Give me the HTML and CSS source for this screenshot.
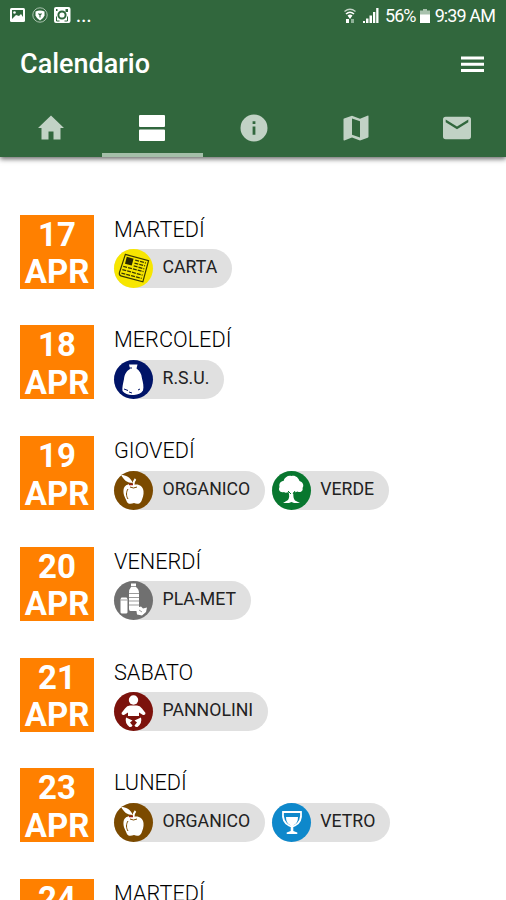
FILE: index.html
```html
<!DOCTYPE html>
<html lang="it">
<head>
    <meta charset="UTF-8">
    <meta name="viewport" content="width=device-width, initial-scale=1.0">
    <title>Calendario</title>

    <link rel="stylesheet" href="styles.css">
</head>
<body>
    <!-- Shared icon, used by two rows -->
    <svg class="defs" width="0" height="0">
        <symbol id="apple" viewBox="0 0 39 39">
            <path fill="#fff" d="M7 4c5 0 9 2 12 8-6 0-9-3-12-8zM19 14c-4-2-9 0-9.500 5-.5 5 2 8 3 11 1 3 4 3.500 7.500 2 3 1.500 6 1 7.500-2 1-3 2.500-6 2-10-.5-5-5-7.500-10.500-6z"/>
            <path fill="none" stroke="#fff" stroke-width="2" d="M19.500 14c0-3 0-4 2-6"/>
            <path fill="none" stroke="#7b4a00" stroke-width="1" d="M14 18c-2 3-2 7 0 10M16 16q3.500 2 7 0"/>
            <path fill="none" stroke="#9a1c16" stroke-width="1.500" d="M15 13.500h4"/>
        </symbol>
    </svg>

    <header>
        <div class="status">
            <svg class="notif" width="64" height="20" viewBox="0 0 64 20">
                <rect x="0" y="1" width="15" height="14" rx="1.500" fill="#fff"/>
                <path fill="#2f673c" d="M2 3h11v7l-2-3-2 2-3-1-4 4z"/>
                <circle cx="4.500" cy="5.500" r="1.300" fill="#fff"/>
                <circle cx="30" cy="8" r="7.200" fill="none" stroke="#a9c2ae" stroke-width="1"/>
                <path fill="#fff" d="M25.500 4.500q4.500-2 9 0v4q-1 3-4.500 5-3.500-2-4.500-5z"/>
                <path fill="none" stroke="#2f673c" stroke-width="1.100" d="M28.500 6.500l1.500 1.500 1.500-1.500M30 8v2.500"/>
                <rect x="44" y="0" width="16.500" height="16" rx="2" fill="#fff"/>
                <path fill="#2f673c" d="M46 2h1.500v2H46zM55.500 2H58v3h-2.500z"/>
                <circle cx="52" cy="8" r="3.600" fill="none" stroke="#2f673c" stroke-width="2"/>
                <path fill="none" stroke="#2f673c" d="M46.500 9.500v4.500h3M57.500 9.500v4.500h-3"/>
            </svg>
            <span class="dots">...</span>
            <span class="push"></span>
            <svg class="wifi" width="12" height="16" viewBox="0 0 12 16">
                <path fill="none" stroke="#c1d2c5" stroke-width="1.300" d="M.5 3.500q5.500-4.500 11 0"/>
                <path fill="none" stroke="#fff" stroke-width="1.600" d="M2 6q4-3.500 8 0"/>
                <path fill="#fff" d="M3.500 7.500q2.500-2 5 0L6 11zM2 11h3v4H2z"/>
                <path fill="#8fb198" d="M7 11h3v4H7z"/>
            </svg>
            <svg class="signal" width="16" height="16" viewBox="0 0 16 16">
                <path fill="#fff" d="M0 13h2v2H0zM3 10.500h2.500V15H3zM6.500 7.500H9V15H6.500zM10 4h2.300v11H10zM13.200 0h2.300v15h-2.300z"/>
            </svg>
            <span class="percent">56%</span>
            <svg class="battery" width="10" height="16" viewBox="0 0 10 16">
                <path fill="#a9c2ae" d="M3 1h4v1.500h3V7H0V2.500h3z"/>
                <path fill="#fff" d="M0 6.500h10V15H0z"/>
            </svg>
            <span class="time">9:39 AM</span>
        </div>

        <div class="title-bar">
            <h1>Calendario</h1>
            <svg width="23" height="17" viewBox="0 0 23 17">
                <path fill="#fff" d="M0 .5h23v3H0zM0 6.800h23v3H0zM0 13h23v3H0z"/>
            </svg>
        </div>

        <nav>
            <a class="tab">
                <svg viewBox="0 0 28 28"><path d="M11.500 25.500H4.500V14H1L14 1.500 27 14h-3.500v11.500h-7v-8h-5z"/></svg>
            </a>
            <a class="tab active">
                <svg viewBox="0 0 28 28"><path d="M2 1h24q1 0 1 1v10q0 1-1 1H2q-1 0-1-1V2q0-1 1-1zM2 15.500h24q1 0 1 1V26q0 1-1 1H2q-1 0-1-1v-9.500q0-1 1-1z"/></svg>
            </a>
            <a class="tab">
                <svg viewBox="0 0 28 28"><path fill-rule="evenodd" d="M14 .5a13.500 13.500 0 1 0 0 27 13.500 13.500 0 0 0 0-27zM12.600 7.200h2.800V10h-2.800zM12.600 12.600h2.800v8.200h-2.800z"/></svg>
            </a>
            <a class="tab">
                <svg viewBox="0 0 28 28"><path fill-rule="evenodd" d="M26 1.500l-8 3.200-8-3L2 4.400q-.5.200-.5.800v20.600q0 .9.800.7l7.700-3.100 8 3 7.700-2.700q.8-.2.800-.9V2.200q0-.8-.5-.7zM18 23.500l-8-2.800V4.500l8 2.800z"/></svg>
            </a>
            <a class="tab">
                <svg viewBox="0 0 28 28"><path fill-rule="evenodd" d="M2.700 2.700h22.600Q28 2.700 28 5.400v17.200q0 2.700-2.700 2.700H2.700Q0 25.300 0 22.600V5.400q0-2.700 2.700-2.700zM25.300 8.200V5.500L14 12.500 2.700 5.500v2.700l11.300 7z"/></svg>
            </a>
        </nav>
    </header>

    <main>
        <section class="day">
            <div class="date">17<br>APR</div>
            <div class="info">
                <h2>MARTEDÍ</h2>
                <div class="chips">
                    <div class="chip">
                        <svg class="icon yellow" viewBox="0 0 39 39">
                            <g transform="rotate(15 19.500 19.500)" fill="none" stroke="#3a3900">
                                <path d="M8 8h24v22H10q-3 0-3-3z" stroke-width="1.200"/>
                                <path fill="#282800" stroke="none" d="M10 10h7v7h-7z"/>
                                <path stroke-width="1.300" stroke-dasharray="4 1" d="M19 11h11M19 14h11M19 17h11M9 20h21M9 23.500h21M9 27h21"/>
                            </g>
                        </svg>
                        <span>CARTA</span>
                    </div>
                </div>
            </div>
        </section>

        <section class="day">
            <div class="date">18<br>APR</div>
            <div class="info">
                <h2>MERCOLEDÍ</h2>
                <div class="chips">
                    <div class="chip">
                        <svg class="icon navy" viewBox="0 0 39 39">
                            <path fill="#fff" d="M15 4.500h8.500l-1 4c3 2 5 5 5.500 10 1 4 2 8 1 12-2 3-5 4-9 4.500-5 .5-9-1-11.500-4-.5-4 .5-7 1.500-12 .5-5 3-8.500 6-10z"/>
                            <path fill="none" stroke="#001468" d="M15 8h3M10 29l4 1.500M15 32l3 1M24 30l2-1"/>
                        </svg>
                        <span>R.S.U.</span>
                    </div>
                </div>
            </div>
        </section>

        <section class="day">
            <div class="date">19<br>APR</div>
            <div class="info">
                <h2>GIOVEDÍ</h2>
                <div class="chips">
                    <div class="chip">
                        <svg class="icon brown"><use href="#apple"/></svg>
                        <span>ORGANICO</span>
                    </div>
                    <div class="chip">
                        <svg class="icon green" viewBox="0 0 39 39">
                            <path fill="#fff" d="M12 21c-4 1-6-2-4.500-5-1-4 2-6 4-6 1-4 5-6 8-5 4-1 7 2 8 5 3 1 5 4 3 7 1 3-2 5-5 3.500-2 1-3 .5-4 .5-.5 4 0 7 1.500 8.500l5 2.500h-6l-2.500-1-2.500 1h-6l5-3c1.500-2 1.500-5 .5-8-2 1-3.500 1-4.500 0z"/>
                            <path fill="none" stroke="#08772f" d="M16 20l3 3M23 20l-2 3"/>
                        </svg>
                        <span>VERDE</span>
                    </div>
                </div>
            </div>
        </section>

        <section class="day">
            <div class="date">20<br>APR</div>
            <div class="info">
                <h2>VENERDÍ</h2>
                <div class="chips">
                    <div class="chip">
                        <svg class="icon grey" viewBox="0 0 39 39">
                            <path fill="#fff" d="M17 2.500h5V6q3 2 3 6v16q0 2-1.500 2h-7q-1.500 0-1.500-2V12q0-4 2-6zM7.500 16.500h5l1 1.500v13.500l-1 1h-5l-1-1V18zM22 27l5-1.500 2 2 4-1-1 4.500-4 3.500-5-1z"/>
                            <path fill="none" stroke="#707070" stroke-width=".7" d="M16 5.500h6M15 12.500h10M15 16.500h10M15 20h10M15 24h10M6.500 19h7M25 29l3 2"/>
                        </svg>
                        <span>PLA-MET</span>
                    </div>
                </div>
            </div>
        </section>

        <section class="day">
            <div class="date">21<br>APR</div>
            <div class="info">
                <h2>SABATO</h2>
                <div class="chips">
                    <div class="chip">
                        <svg class="icon red" viewBox="0 0 39 39">
                            <circle cx="19.500" cy="8" r="4.700" fill="#fff"/>
                            <path fill="#fff" d="M16 13.500h7q3 0 5 3l3.500 4.500q0 2.500-2.500 2L25 20.500V24H14v-3.500L10 23q-2.500.5-2.500-2l3.500-4.500q2-3 5-3z"/>
                            <path fill="#fff" d="M12 25.500l6.500 3-2.500 2 2.500 3q-1 2-3 1.500-5-4-3.500-9.500zM27 25.500l-6.500 3 2.500 2-2.500 3q1 2 3 1.500 5-4 3.500-9.500z"/>
                        </svg>
                        <span>PANNOLINI</span>
                    </div>
                </div>
            </div>
        </section>

        <section class="day">
            <div class="date">23<br>APR</div>
            <div class="info">
                <h2>LUNEDÍ</h2>
                <div class="chips">
                    <div class="chip">
                        <svg class="icon brown"><use href="#apple"/></svg>
                        <span>ORGANICO</span>
                    </div>
                    <div class="chip">
                        <svg class="icon blue" viewBox="0 0 39 39">
                            <path fill="none" stroke="#fff" stroke-width="1.800" d="M11 9h18q1 10-6 13.500-3 1.500-6 0Q10 19 11 9z"/>
                            <path fill="#fff" d="M14 14h12q0 6-4 8h-4q-4-2-4-8zM18.700 22h2.600v6l4 1.500V31H14.700v-1.500l4-1.500z"/>
                        </svg>
                        <span>VETRO</span>
                    </div>
                </div>
            </div>
        </section>

        <section class="day">
            <div class="date">24<br>APR</div>
            <div class="info">
                <h2>MARTEDÍ</h2>
            </div>
        </section>
    </main>
</body>
</html>
```
FILE: styles.css
```css
body {
    font-family: Roboto, sans-serif;
    background: #ffffff;
    color: #000000;
    margin: 0;
    height: 900px;
    overflow: hidden;
}

.defs {
    position: absolute;
}

header {
    background: #31673d;
    color: #ffffff;
    height: 157px;
    box-shadow: 0 2px 5px rgba(0, 0, 0, 0.6);
}

.status {
    display: flex;
    align-items: center;
    height: 31px;
    padding: 0 11px 0 10px;
    font-size: 18px;
    line-height: 31px;
}

.notif {
    margin-top: 3px;
}

.dots {
    margin-left: 2px;
    font-weight: 500;
    letter-spacing: 0.2px;
}

.push {
    flex: 1;
}

.signal {
    margin: 0 6px 0 7px;
}

.battery {
    margin: 0 5px 0 4px;
}

.percent,
.time {
    white-space: nowrap;
    letter-spacing: -0.9px;
}

.title-bar {
    display: flex;
    justify-content: space-between;
    align-items: center;
    height: 66px;
    padding: 0 22px 0 20px;
}

h1 {
    margin: 0;
    font-size: 27px;
    font-weight: 500;
}

nav {
    display: flex;
    width: 508px;
    height: 60px;
}

.tab {
    flex: 1;
    display: flex;
    justify-content: center;
    align-items: center;
    box-sizing: border-box;
    padding-top: 5px;
    border-bottom: 4px solid transparent;
}

.tab svg {
    width: 28px;
    height: 28px;
    fill: #c1d2c5;
}

.tab.active {
    border-bottom-color: #a4bfa9;
}

.tab.active svg {
    fill: #ffffff;
}

main {
    padding: 57.5px 20px 0;
}

.day {
    display: flex;
    gap: 20px;
    height: 74px;
    margin-bottom: 36.8px;
}

.date {
    box-sizing: border-box;
    width: 74px;
    height: 74px;
    padding-top: 1px;
    background: #ff8000;
    color: #ffffff;
    font-size: 33px;
    font-weight: 700;
    line-height: 37.5px;
    text-align: center;
}

.day:last-child {
    margin-bottom: 0;
}

h2 {
    margin: 0;
    height: 34.5px;
    font-size: 21.7px;
    font-weight: 300;
    line-height: 30px;
}

.chips {
    display: flex;
    gap: 7px;
}

.chip {
    display: flex;
    height: 39px;
    padding-right: 14.5px;
    border-radius: 20px;
    background: #e0e0e0;
    color: #222222;
    font-size: 17.7px;
    line-height: 37px;
}

.icon {
    width: 39px;
    height: 39px;
    margin-right: 9.5px;
    border-radius: 50%;
}

.yellow { background: #f7e600; }
.navy { background: #001468; }
.brown { background: #7b4a00; }
.green { background: #08772f; }
.grey { background: #707070; }
.red { background: #7c120c; }
.blue { background: #0e88cb; }
```
